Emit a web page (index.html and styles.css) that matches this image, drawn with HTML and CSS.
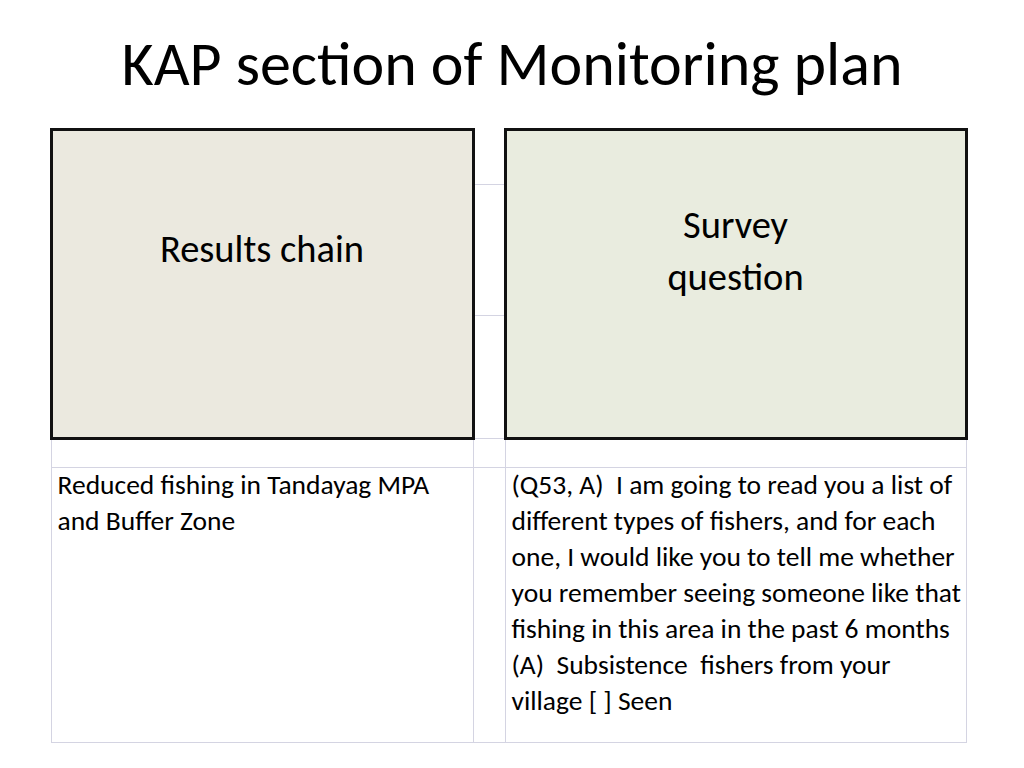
FILE: index.html
```html
<!DOCTYPE html>
<html lang="en">
<head>
<meta charset="utf-8">
<title>KAP section of Monitoring plan</title>
<link rel="stylesheet" href="styles.css">
</head>
<body>
<main class="slide">
  <h1 class="title">KAP section of Monitoring plan</h1>
  <table class="plan">
    <colgroup>
      <col class="col-chain">
      <col class="col-gap">
      <col class="col-survey">
    </colgroup>
    <tbody>
      <tr class="r1">
        <th class="head head-chain" rowspan="3"><span class="head-text">Results chain</span></th>
        <td class="gap gap-top"></td>
        <th class="head head-survey" rowspan="3"><span class="head-text">Survey<br>question</span></th>
      </tr>
      <tr class="r2"><td class="gap"></td></tr>
      <tr class="r3"><td class="gap"></td></tr>
      <tr class="r4"><td class="cell"></td><td class="cell"></td><td class="cell"></td></tr>
      <tr class="r5">
        <td class="cell body">Reduced fishing in Tandayag MPA<br>and Buffer Zone</td>
        <td class="cell"></td>
        <td class="cell body">(Q53, A)&nbsp; I am going to read you a list of<br>different types of fishers, and for each<br>one, I would like you to tell me whether<br>you remember seeing someone like that<br>fishing in this area in the past 6 months<br>(A)&nbsp; Subsistence&nbsp; fishers from your<br>village [ ] Seen</td>
      </tr>
    </tbody>
  </table>
</main>
</body>
</html>
```

FILE: styles.css
```css
html, body {
  margin: 0;
  padding: 0;
  background: #ffffff;
}

body {
  font-family: "Carlito", "Lato", "Liberation Sans", sans-serif;
  color: #000000;
}

.slide {
  width: 1024px;
  height: 768px;
  display: flex;
  flex-direction: column;
  align-items: center;
}

.title {
  margin: 26px 0 0 0;
  height: 102px;
  font-size: 62px;
  font-weight: 400;
  line-height: 76px;
  text-align: center;
}

.plan {
  margin-left: -7px;
  border-collapse: collapse;
  table-layout: fixed;
  width: 915px;
}

.col-chain { width: 422px; }
.col-gap { width: 32px; }
.col-survey { width: 461px; }

.r1 { height: 55px; }
.r2 { height: 131px; }
.r3 { height: 123px; }
.r4 { height: 29px; }
.r5 { height: 275px; }

.plan td, .plan th {
  padding: 0;
  border: 1px solid #d4d4e2;
}

.plan .head {
  border: 3px solid #111111;
  font-weight: 400;
  font-size: 38.5px;
  line-height: 52px;
  text-align: center;
  vertical-align: top;
}

.head-text {
  display: block;
  padding-top: 68px;
}

.head-chain { background: #ebe9df; }
.head-chain .head-text { padding-top: 92px; }
.head-survey { background: #e9ecdf; }

.plan .gap-top { border-top: none; }

.plan .body {
  vertical-align: top;
  font-size: 27.5px;
  line-height: 36px;
  padding: 0 0 0 6px;
  position: relative;
  top: -1px;
}
```
